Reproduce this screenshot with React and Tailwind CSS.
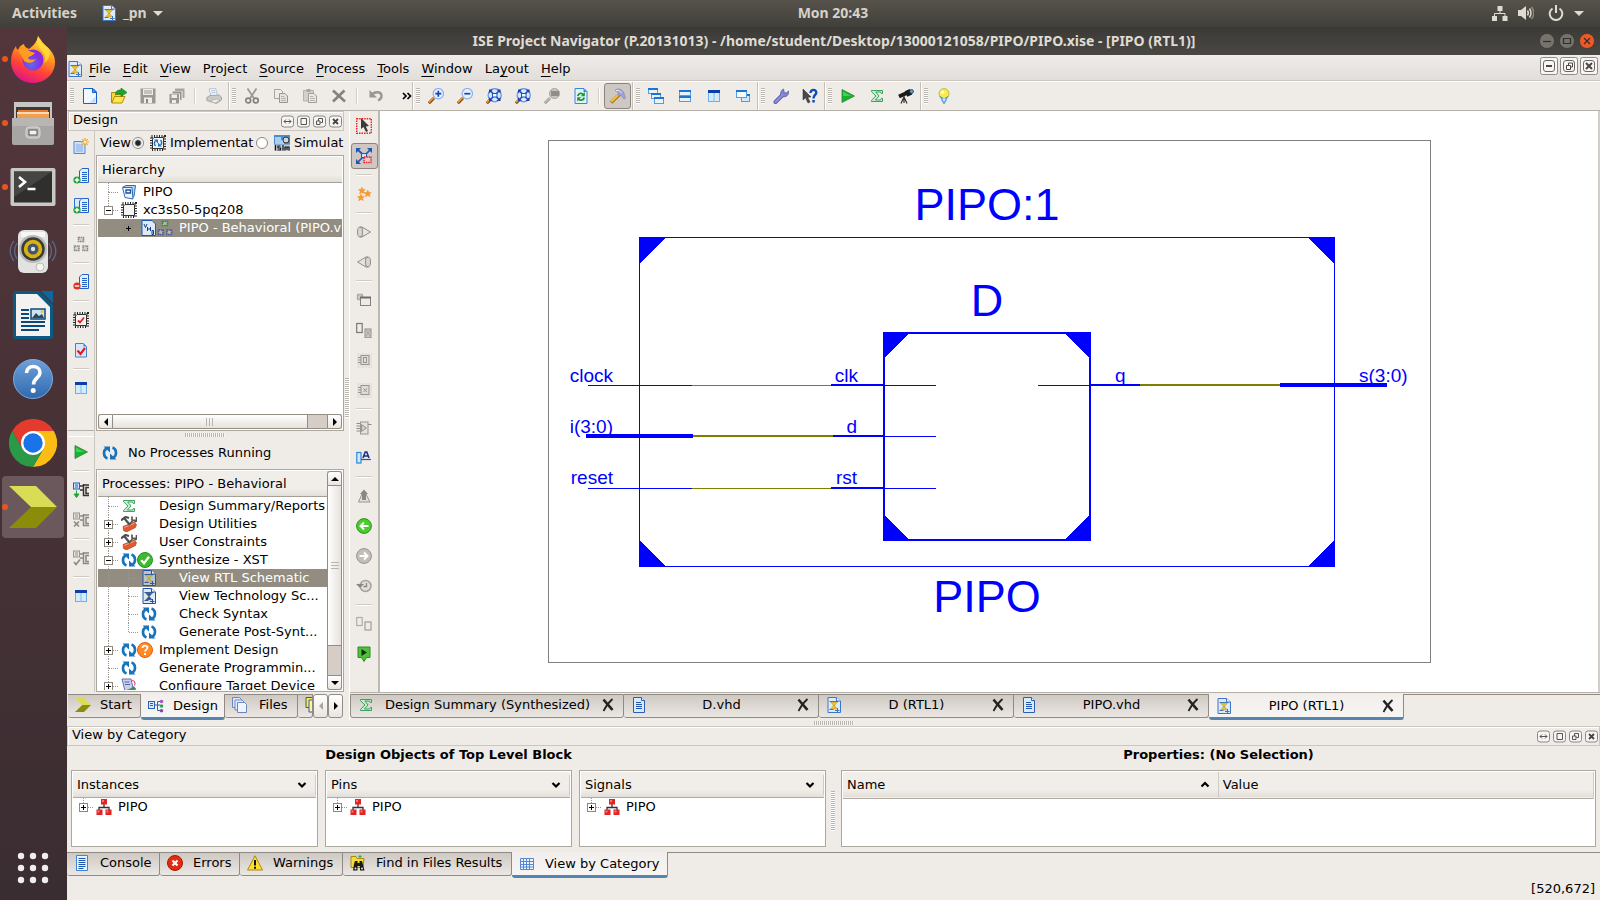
import React from "react";

/* ---------- icon helpers ---------- */
const I = ({ children, s = 16, vb = "0 0 16 16", className = "" }) => (
  <svg width={s} height={s} viewBox={vb} className={"shrink-0 " + className} fill="none" aria-hidden="true">
    {children}
  </svg>
);

const Doc = () => (
  <I>
    <path d="M2.500 .5h8l3 3v12h-11z" fill="#dbe9fb" stroke="#2a5fb8" />
    <path d="M10.500 .5v3h3" fill="#fff" stroke="#2a5fb8" />
    <path d="M5 5.500h5M5 7.500h6M5 9.500h6M5 11.500h6" stroke="#1f56b5" />
  </I>
);
const NewDoc = () => (
  <I>
    <path d="M1.500 .5h9.500l3.500 3.500v11.500h-13z" fill="#eff7ff" stroke="#1560c8" />
    <path d="M10.500 .5v4h4z" fill="#5c9cf0" stroke="#1560c8" />
    <path d="M8 14.500h5.500v-6z" fill="#bcdcff" />
  </I>
);
const OpenFolder = () => (
  <I>
    <path d="M.5 14.500V4.500h5l1 2h5v3z" fill="#f6d838" stroke="#b08a10" />
    <path d="M.8 15 3.500 8.500H14L11 15z" fill="#ffe84a" stroke="#b08a10" />
    <path d="M4.500 7c0-4 2-5.200 5.500-5V0l6 4.500-6 4V6C7.500 5.800 6.500 6 4.500 7z" fill="#1fa52b" stroke="#0c7a1a" strokeWidth=".6" />
  </I>
);
const Save = () => (
  <I>
    <path d="M.5.5h15v15h-15z" fill="#9b9893" />
    <path d="M3 1h10v6H3z" fill="#efebe7" />
    <path d="M4 3h8M4 5h8" stroke="#9b9893" />
    <path d="M4 9.500h8V15H4z" fill="#efebe7" />
    <path d="M6 11h2v4H6z" fill="#8b8883" />
  </I>
);
const SaveAll = () => (
  <I>
    <path d="M6 .5h9.500v9.500h-2V3H6z" fill="#a9a6a1" />
    <path d="M3.500 3.500h9V12h-1.500V5.500H3.500z" fill="#94918c" />
    <path d="M.5 6h9.500v9.500H.5z" fill="#9b9893" />
    <path d="M2.500 6.500h5.500V10H2.500z" fill="#efebe7" />
    <path d="M3 12h4v3H3z" fill="#efebe7" />
  </I>
);
const Printer = () => (
  <I>
    <path d="M3 1 9.500 0l2 8H5z" fill="#f3f6fb" stroke="#a9b6cf" strokeWidth=".8" />
    <path d="M5 3l4-.6M5.500 5l4-.6" stroke="#9fb0d0" strokeWidth=".8" />
    <path d="M.8 9.500 4 7.500l9-.5 2.500 2v3l-5 3.500L.8 12.500z" fill="#cbc9c6" stroke="#9c9995" strokeWidth=".8" />
    <path d="M4 13 11 11l3 1-5 3z" fill="#eef1f5" stroke="#a8a5a1" strokeWidth=".6" />
  </I>
);
const Cut = () => (
  <I>
    <path d="M3.500 .5 9.800 10M12.500 .5 6.200 10" stroke="#9a9792" strokeWidth="1.700" />
    <circle cx="4.200" cy="12.500" r="2.400" stroke="#85827d" strokeWidth="1.700" />
    <circle cx="11.800" cy="12.500" r="2.400" stroke="#85827d" strokeWidth="1.700" />
  </I>
);
const Copy = () => (
  <I>
    <path d="M1.500 1.500h6l2 2v7h-8z" fill="#efebe7" stroke="#a7a49f" />
    <path d="M6.500 5.500h5.500l2.500 2.500v6.500h-8z" fill="#e6e3df" stroke="#98958f" />
    <path d="M8 8.500h3.500M8 10.500h5M8 12.500h5" stroke="#b5b2ad" />
  </I>
);
const Paste = () => (
  <I>
    <path d="M1.500 2.500h10v10.500h-10z" fill="#d3d0cb" stroke="#b5b2ad" />
    <path d="M4.500 1h4v3h-4z" fill="#aaa7a2" />
    <path d="M6.500 5.500h5.500l2.500 2.500v6.500h-8z" fill="#ece9e5" stroke="#a09d98" />
    <path d="M8 8.500h3.500M8 10.500h5M8 12.500h5" stroke="#b5b2ad" />
  </I>
);
const Del = () => (
  <I>
    <path d="M2 2.500 14 13.500M13.500 2.500 2 13.500" stroke="#85827d" strokeWidth="2.600" />
  </I>
);
const Undo = () => (
  <I>
    <path d="M3.500 7.500c2-4 9.500-4.500 10 0 .2 2.500-1.500 4-3.500 4.800" stroke="#9a9792" strokeWidth="2.400" />
    <path d="M1.500 2v7.500h7.500z" fill="#9a9792" />
  </I>
);
const Mag = ({ kind, gray }) => (
  <I>
    <path d="M.8 15.200 6 10" stroke={gray ? "#a5a29d" : "#8a4a18"} strokeWidth="3" />
    <path d="M.8 14.400 5.500 9.800" stroke={gray ? "#bdbab5" : "#f09a30"} strokeWidth="1.600" />
    {gray && (
      <>
        <circle cx="10.500" cy="5.500" r="5" fill="#c9c6c1" stroke="#a5a29d" />
        <rect x="7" y="3" width="8" height="5" fill="#908d88" />
      </>
    )}
    {(kind === "in" || kind === "out") && (
      <circle cx="10.300" cy="5.700" r="5.200" fill="#e3f0ff" stroke="#8fb0ec" strokeWidth="1.200" />
    )}
    {kind === "in" && <path d="M10.300 2.700v6M7.300 5.700h6" stroke="#1c43b0" strokeWidth="1.700" />}
    {kind === "out" && <path d="M7.300 5.700h6" stroke="#1c43b0" strokeWidth="1.700" />}
    {kind === "fit" && (
      <>
        <circle cx="8.700" cy="7.200" r="6.600" fill="#d5e8ff" stroke="#6a90e0" strokeWidth="1.200" />
        <path d="M4 2.500 13.400 12M13.400 2.500 4 12" stroke="#2350b8" strokeWidth="1.700" />
        <path d="M3 1.500h4L3 5.500zM14.500 1.500h-4l4 4zM3 13h4L3 9zM14.500 13h-4l4-4z" fill="#1c43b0" />
        <rect x="6.500" y="5.500" width="4.500" height="3.500" fill="#f4f9ff" stroke="#2350b8" />
      </>
    )}
  </I>
);
const RefreshDoc = () => (
  <I>
    <path d="M2 .5h9l3 3v12H2z" fill="#e1f2ff" stroke="#3a86d8" />
    <path d="M10.500 .5v3.500h3.500" fill="#3a86d8" />
    <path d="M4.800 8c.5-3 4-3.500 5.700-1.500" stroke="#1b9a2a" strokeWidth="1.800" />
    <path d="M11.800 4v4.200H7.800z" fill="#1b9a2a" />
    <path d="M11.200 9.500c-.5 3-4 3.500-5.700 1.500" stroke="#1b9a2a" strokeWidth="1.800" />
    <path d="M4.200 13.500V9.300h4z" fill="#1b9a2a" />
  </I>
);
const Hammer = () => (
  <I>
    <path d="M1 14.500 9.500 6.500" stroke="#a8761a" strokeWidth="3.400" />
    <path d="M1 13.800 9 6.300" stroke="#f4c92c" strokeWidth="2" />
    <path d="M5 2.500C7.500 0 11 .5 13.500 4l2 6-1.500 1-3.500-4L8.500 7.500 8 4z" fill="#9fa4dc" stroke="#7a7fb8" strokeWidth=".6" />
    <path d="M6 2.500 9 2.500l2.500 2.500" stroke="#e8eaff" />
  </I>
);
const Win = ({ x, y, w, h, fill = "#e4f3ff" }) => (
  <>
    <rect x={x + 0.5} y={y + 0.5} width={w - 1} height={h - 1} fill={fill} stroke="#4f9fe6" />
    <rect x={x} y={y} width={w} height="2" fill="#1f74d0" />
  </>
);
const Cascade = () => (
  <I><Win x={0} y={0} w={10} h={6} /><Win x={3} y={5} w={10} h={6} /><Win x={6} y={9} w={10} h={7} /></I>
);
const TileH = () => (
  <I><Win x={2} y={2} w={12} h={6} /><Win x={2} y={8} w={12} h={6} /></I>
);
const TileV = () => (
  <I>
    <rect x="2.500" y="2.500" width="11" height="11" fill="#d5eafc" stroke="#6ab0ec" />
    <rect x="2" y="2" width="12" height="3" fill="#0a3fa8" />
    <path d="M8 5v9" stroke="#7fbcf0" />
  </I>
);
const Overlap = () => (
  <I><Win x={6} y={6} w={9} h={8} fill="#d0e8fc" /><Win x={1} y={2} w={11} h={8} fill="#f4faff" /></I>
);
const Wrench = () => (
  <I>
    <path d="M2.500 14 9 7.500" stroke="#5a5daa" strokeWidth="4" strokeLinecap="round" />
    <path d="M9 8.500c-2.500-2-1.500-6 1.500-7.500l.5 3 2 1.200L15.500 3c1 3.500-2.500 7-6.500 5.500z" fill="#8083cc" stroke="#5a5daa" strokeWidth=".8" />
    <path d="M2.500 14 9.500 7" stroke="#8c8fe0" strokeWidth="2.200" strokeLinecap="round" />
  </I>
);
const WhatsThis = () => (
  <I>
    <path d="M1 1v11l2.600-2.200L6 15l2-1-2.300-4.700L9 9z" fill="#4a4a4a" stroke="#222" strokeWidth=".5" />
    <path d="M8.500 5C8.500 .8 14.500 1 14.300 4.800 14.200 7 11.500 7 11.500 10.500" stroke="#0f4bb8" strokeWidth="2.400" />
    <path d="M10.300 12h2.500v2.500h-2.500z" fill="#0f4bb8" />
  </I>
);
const Play = () => (
  <I>
    <path d="M2 1.500 14.500 8 2 14.500z" fill="#14b52a" stroke="#3b7a4a" strokeWidth=".8" />
    <path d="M3 3.500 11 8H3z" fill="#3fd455" />
  </I>
);
const Sigma = () => (
  <I>
    <path d="M2.500 2.500h11v3h-1.200l-.8-1.500H6.800L10 8l-3.600 4h5.200l.9-1.700h1v3.200h-11v-1.200L7 8 2.500 3.700z" fill="#c8efd0" stroke="#2d9a50" strokeWidth=".9" />
  </I>
);
const Telescope = () => (
  <I>
    <path d="M1 8.500 12 3.500" stroke="#1a1a1a" strokeWidth="4" />
    <path d="M8 6 13 3.700" stroke="#1a1a1a" strokeWidth="6" />
    <circle cx="13.500" cy="3.500" r="2" fill="#4f9fe0" stroke="#111" strokeWidth=".6" />
    <path d="M6 8v7M6 9l-3 6.500M6 9l3 6.500" stroke="#333" strokeWidth="1.200" />
  </I>
);
const Bulb = () => (
  <I>
    <circle cx="8" cy="5.600" r="5" fill="#ffe94a" stroke="#9cb82e" strokeWidth=".8" />
    <circle cx="6.500" cy="4.300" r="1.800" fill="#fffbd0" />
    <path d="M3.800 8.500c1.700 1.200 1.700 3 2.200 4L8 15.800l2-3.300c.5-1 .5-2.800 2.200-4-2 2-6.400 2-8.400 0z" fill="#7fc4f4" stroke="#2f86d0" strokeWidth=".8" />
    <path d="M8 9v4" stroke="#fff" />
  </I>
);

/* left toolbars */
const NewSource = () => (
  <I>
    <path d="M1 3.500h11v12H1z" fill="#cfe0fa" stroke="#5b86cc" />
    <path d="M3 6h7v8H3z" fill="#a9c6f2" />
    <path d="M12 0v8M8 4h8M9.200 1.200l5.600 5.600M14.800 1.200 9.200 6.800" stroke="#f2a52c" strokeWidth="1.200" />
    <circle cx="12" cy="4" r="1.500" fill="#fff3b0" />
  </I>
);
const AddSource = ({ two, minus }) => (
  <I>
    {two && <path d="M1.500 .5h7v11h-7z" fill="#d8e8ff" stroke="#2f6fd0" />}
    <path d="M6.500 3 9 .5h6.500v14h-9z" fill="#e4f0ff" stroke="#2562c4" />
    <path d="M9 4.500h5M9 6.500h5M9 8.500h5M9 10.500h5M9 12.500h5" stroke="#2562c4" />
    <circle cx="4" cy="12" r="3.600" fill={minus ? "#e0301e" : "#1fa33a"} />
    <path d={minus ? "M1.800 12h4.400" : "M1.800 12h4.400M4 9.800v4.400"} stroke="#fff" strokeWidth="1.400" />
  </I>
);
const Modules = ({ top = "#8a8782", c = "#8a8782", fill = "#d8d5d0" }) => (
  <I>
    <rect x="5.500" y="1.500" width="5" height="4" fill={fill} stroke={top} strokeDasharray="1.500 .7" strokeWidth="1.600" />
    <rect x="1.500" y="10" width="4.500" height="4.500" fill={fill} stroke={c} strokeDasharray="1.500 .7" strokeWidth="1.500" />
    <rect x="10" y="10" width="4.500" height="4.500" fill={fill} stroke={c} strokeDasharray="1.500 .7" strokeWidth="1.500" />
  </I>
);
const Chip = ({ check, blue }) => (
  <I>
    <rect x="1.500" y="1.500" width="13" height="13" stroke="#222" strokeWidth="3" strokeDasharray="1 1.500" />
    <path d="M4 2.500h9.500v11h-11V4z" fill="#f4f4f4" stroke="#333" />
    {check && <path d="M5 8.500 7 10.500 11 5.500" stroke="#e02020" strokeWidth="1.800" />}
    {blue && (
      <>
        <path d="M5.500 11C4 9.500 4 7 5.500 6M10.500 5C12 6.500 12 9 10.500 10" stroke="#1878c8" strokeWidth="1.500" />
        <path d="M4 4.500h4v4zM12 11.500H8v-4z" fill="#1878c8" />
      </>
    )}
  </I>
);
const DocCheck = () => (
  <I>
    <path d="M2.500 1.500h8l3 3v10.500h-11z" fill="#d6e6fc" stroke="#4a7fd0" />
    <path d="M10.500 1.500v3h3" fill="#4a7fd0" />
    <path d="M4.500 8.500 7.500 12 12 6" stroke="#e02020" strokeWidth="2.200" />
  </I>
);
const Flow = ({ active, check }) => (
  <I>
    <rect x=".5" y="1" width="6" height="6" fill={active ? "#d6e8ff" : "#e6e3de"} stroke={active ? "#1f5fc0" : "#98958f"} />
    <path d="M2 3h3M2 5h3" stroke={active ? "#1f5fc0" : "#98958f"} />
    <path d="M7 4h3M10.500 2v12M10 3h6M10 8H7M16 5.500h-3v6h3M10 13.500h6" stroke={active ? "#333" : "#8b8883"} strokeWidth="1.500" />
    {active && <path d="M3.500 8.500v4M1 12l2.500 3.500L6 12z" stroke="#1fa33a" fill="#1fa33a" />}
    {!active && !check && <path d="M1 9.500l5 5M6 9.500l-5 5" stroke="#8b8883" strokeWidth="1.600" />}
    {check && <path d="M1 12l2 2.500L7 9.500" stroke="#8b8883" strokeWidth="1.600" />}
  </I>
);

/* schematic toolbar */
const Select = () => (
  <I>
    <rect x=".7" y=".7" width="14.600" height="14.600" stroke="#f02020" strokeWidth="1.400" strokeDasharray="1.500 1" />
    <path d="M5 0v11l2.500-2L10 14l2-1-2.200-4.500L13 8z" fill="#3a3a3a" />
  </I>
);
const Expand = () => (
  <I>
    <path d="M2 2l12 11M14 2 2 14" stroke="#1d55b8" strokeWidth="1.700" />
    <path d="M0 0h5L0 5zM16 0h-5l5 5zM0 16h5l-5-5z" fill="#1d55b8" />
    <path d="M5.500 5.500h5v4h-5z" fill="#cfe4fb" stroke="#1d55b8" />
    <rect x="8" y="9" width="7" height="5.500" fill="#d9cfca" stroke="#f02020" strokeWidth="1.400" strokeDasharray="1.500 .8" />
  </I>
);
const star = (x, y) => <path d={`M${x} ${y - 3.5}l1 2.300 2.500.2-1.800 1.800.7 2.400-2.500-1.200-2.300 1.400.5-2.600-1.800-1.700 2.500-.3z`} fill="#fb9a2c" stroke="#f08a20" strokeWidth=".3" />;
const Stars = () => <I>{star(6, 4.5)}{star(11.8, 7.5)}{star(5, 11.5)}</I>;
const Cone = ({ flip }) => (
  <I className={flip ? "-scale-x-100" : ""}>
    <path d="M6 3l8.500 5L6 13z" fill="#e6e3de" stroke="#918e89" />
    <ellipse cx="4" cy="8" rx="2.500" ry="5" fill="#d8d5d0" stroke="#918e89" />
    <path d="M4 3h2M4 13h2" stroke="#918e89" />
  </I>
);
const ToWin = () => (
  <I>
    <rect x="1.500" y="2.500" width="5" height="5" fill="#d0cdc8" stroke="#84817c" strokeWidth="1.500" strokeDasharray="1 1" />
    <rect x="4.500" y="5.500" width="10" height="8" fill="#eeebe7" stroke="#84817c" />
    <path d="M4 5.500h11" stroke="#6f6c68" strokeWidth="2" />
  </I>
);
const PairBox = ({ light }) => (
  <I>
    <rect x=".7" y="1.500" width="5.500" height={light ? 8 : 9} fill="#efebe7" stroke={light ? "#b0ada8" : "#7b7874"} strokeWidth="1.200" />
    <rect x="9" y={light ? 6 : 7} width="6" height={light ? 8 : 8.5} fill={light ? "#efebe7" : "#ccc9c4"} stroke="#a09d98" strokeWidth="1.200" />
    {!light && <path d="M10 8l4 6M14 8l-4 6" stroke="#a5a29d" />}
  </I>
);
const PinBox = ({ x }) => (
  <I>
    <path d="M1 1h15v15H1z" fill="#e6e3de" />
    <path d="M2 5.500h4M2 8h4M2 10.500h4" stroke="#98958f" />
    <rect x="5" y="3.500" width="8" height="9" fill="#dfdcd7" stroke="#98958f" />
    {x ? <path d="M7.500 6.500l3.500 3.500M11 6.500 7.500 10" stroke="#98958f" /> : <rect x="7.500" y="5.500" width="3" height="5" stroke="#98958f" />}
  </I>
);
const GateBox = () => (
  <I>
    <path d="M.5 3.500h4M.5 6h4M.5 8.500h4M.5 11h4M12 4.500h3.500" stroke="#8f8c87" />
    <rect x="4.500" y="2" width="7.500" height="12" fill="#e6e3de" stroke="#98958f" />
    <path d="M5.500 4.500 10.500 8l-5 3.500z" fill="#cfccc7" stroke="#98958f" />
  </I>
);
const NameBox = () => (
  <I>
    <rect x=".8" y="2.500" width="4.200" height="10.500" fill="#cdeafc" stroke="#2f86d8" strokeWidth="1.200" />
    <path d="M5 9.500h10" stroke="#1f56b5" strokeWidth="1.200" />
    <path d="M7 8 9.200 2h1.600L13 8M8.200 6h3.800" stroke="#1c2f8c" strokeWidth="1.600" />
  </I>
);
const PushUp = () => (
  <I>
    <path d="M2.500 14 6 6h4l4 8z" fill="#e2dfda" stroke="#98958f" />
    <path d="M8 1.500 12 6h-2v6H6V6H4z" fill="#8a8782" />
  </I>
);
const RoundArrow = ({ green }) => (
  <I>
    <circle cx="8" cy="8" r="7.400" fill={green ? "#4ccb2c" : "#c2bfba"} stroke={green ? "#2a9418" : "#96938e"} />
    <path d={green ? "M12.500 8H4.500M8 4.500 4.500 8 8 11.500" : "M3.500 8h8M8 4.500 11.500 8 8 11.500"} stroke="#fff" strokeWidth="1.900" />
  </I>
);
const History = () => (
  <I>
    <circle cx="9.500" cy="8" r="5.500" fill="#e0ddd8" stroke="#a5a29d" strokeWidth="1.500" />
    <path d="M10.500 5v3.500h-3" stroke="#8b8883" strokeWidth="1.300" />
    <path d="M0 6h8L4 10z" fill="#8b8883" />
  </I>
);
const GreenPin = () => (
  <I>
    <path d="M2 1h12v10.500h-3.500L8 15.500l-2.500-4H2z" fill="#4fc23a" stroke="#2f8a22" />
    <path d="M5.500 3 11 6.500l-5.500 3.500z" fill="#14310f" />
  </I>
);

/* tree and tab icons */
const Sync = () => (
  <I>
    <path d="M5.500 13.500C1 12 1 5.500 4.500 3.500" stroke="#1674bc" strokeWidth="2.600" />
    <path d="M1.500 1.500H8v6z" fill="#1674bc" />
    <path d="M10.500 2.500C15 4 15 10.500 11.500 12.500" stroke="#1674bc" strokeWidth="2.600" />
    <path d="M14.500 14.500H8v-6z" fill="#1674bc" />
  </I>
);
const Ok = () => (
  <I><circle cx="8" cy="8" r="7.500" fill="#3dbb2f" stroke="#27901d" /><path d="M4.200 8.200 7 11.200l5-6.400" stroke="#fff" strokeWidth="2.200" /></I>
);
const Ask = () => (
  <I>
    <circle cx="8" cy="8" r="7.500" fill="#ff8a24" stroke="#ee5a10" />
    <path d="M5.500 6C5.500 2.800 10.700 3 10.500 6c-.1 1.500-2.500 1.800-2.500 3.600" stroke="#fff" strokeWidth="1.800" />
    <path d="M7 11h2v2H7z" fill="#fff" />
  </I>
);
const ToolBox = () => (
  <I>
    <path d="M2 10.500 13 6l2.500 2.500L14.500 11.500 5.500 16 2.500 14.500z" fill="#e2582f" stroke="#a8381a" strokeWidth=".6" />
    <path d="M3 11.500 13.500 7.300" stroke="#f2a080" />
    <path d="M0 4.500 4.500 1 8 2M3 2l6 7" stroke="#4f4f4f" strokeWidth="2.200" />
    <path d="M11 .5v3.500l4 .5M12.500 4 8.500 8M15.500 1v4l-2 1" stroke="#555" strokeWidth="1.700" />
  </I>
);
const Rtl = ({ tone = "#eec22e", bg = "#dcebfc", line = "#3f74cc" }) => (
  <I>
    <path d="M2 .5h8.500L14.500 4v11.500H2z" fill={bg} stroke={line} />
    <path d="M10.500 .5V4h4" fill="#fff" stroke={line} />
    <path d="M3.500 4.500h9M3.500 12.500h4" stroke={line} />
    <path d="M4.500 5h7L8 9zM8 8l3.500 4h-7z" fill={tone} stroke="#a08420" strokeWidth=".4" />
    <path d="M9 13.500h4.500M11.500 11v4" stroke={line} />
  </I>
);
const VhdFile = () => (
  <I>
    <path d="M1 .5h10l3.500 3.500v11.500H1z" fill="#ddeafb" stroke="#1c5bb0" />
    <path d="M3 4l1.500 3.500L6 4M6.500 7v4M9.500 7v4M6.500 9h3M11 10.500v4h1.500v-4z" stroke="#123f86" />
  </I>
);
const Project = () => (
  <I>
    <path d="M2 3 5 1.500h9.500l-1.500 11-3 2.500" fill="#b5d2f2" stroke="#2f6db8" />
    <path d="M1.500 3.500h9.500L12 15l-8-1.500z" fill="#edf5fe" stroke="#2f6db8" />
    <path d="M5 6h4.500v3H5z" fill="#fff" stroke="#1c4f9c" strokeWidth="1.300" />
  </I>
);
const Isim = () => (
  <I>
    <path d="M0 0h16v16H0z" fill="#4a8ccc" />
    <path d="M1 2h6v3h3v4H1z" fill="#a8cff2" />
    <circle cx="12" cy="5" r="3" fill="#cfd6dc" stroke="#333" />
    <path d="M0 9.500h16V16H0z" fill="#c5ccd2" />
    <path d="M1.500 10v5.500M6.500 11H4v2h2.500v2H3.500M9 10v5.500M11 15.500V12h4v3.500M13 12v3" stroke="#111" strokeWidth="1.200" />
  </I>
);
const ConfigDev = () => (
  <I>
    <path d="M1 1h9l2 9-8 3z" fill="#c9d0ee" stroke="#6a6fa8" />
    <path d="M3.500 4h5M4 6.500h5" stroke="#5a5f9c" />
    <path d="M11 2.500c3 0 3.500 3 2.500 5" stroke="#e04a7c" strokeWidth="1.200" />
    <path d="M8 14.500 14 9.500" stroke="#3c8f4c" strokeWidth="4" />
    <path d="M2 15h6" stroke="#555" strokeWidth="2" />
  </I>
);
const Chevron = ({ s = 16 }) => (
  <I s={s} vb="0 0 48 44">
    <path d="M0 1h27l21 21H22z" fill="#d9dc55" />
    <path d="M22 22h26L27 43H0z" fill="#8a8c0a" />
  </I>
);
const DesignTab = () => (
  <I>
    <rect x=".5" y="3.500" width="6" height="7" fill="#d8e8ff" stroke="#2a5fb8" /><path d="M2 5.500h3M2 7.500h3M7 7h5M9.500 3.500v9h3M9.500 3.500h3" stroke="#2a5fb8" />
    <circle cx="13.500" cy="3.500" r="1.800" fill="#a05ac8" /><circle cx="13.500" cy="8" r="1.800" fill="#2aa34a" /><circle cx="13.500" cy="12.800" r="1.800" fill="#7a4ab8" />
  </I>
);
const FilesTab = () => (
  <I>
    <path d="M.5 .5h7l2 2v8h-9z" fill="#dde9fb" stroke="#6a86c0" />
    <path d="M3 3h7l2 2v8H3z" fill="#e6effc" stroke="#6a86c0" />
    <path d="M5.500 5.500h7l2 2v8h-9z" fill="#eef5ff" stroke="#6a86c0" />
  </I>
);
const LibTab = () => (
  <I><path d="M1 .5h9v10H1z" fill="#ffe84a" stroke="#2a6f4a" /><path d="M4 3h9v12H4z" fill="#fff2a0" stroke="#2a5fb8" /></I>
);
const Blocks = () => (
  <I>
    <path d="M8 5v4M3 11V8.500h10V11" stroke="#333" strokeWidth="1.300" />
    <path d="M5 0h6v5.500H5zM.5 10.500h6V16h-6zM9.500 10.500h6V16h-6z" fill="#e02424" />
    <path d="M6 1h2v2H6zM1.500 11.500h2v2h-2zM10.500 11.500h2v2h-2z" fill="#f47a7a" />
  </I>
);
const ConsoleI = () => (
  <I><path d="M2.500 .5h11v15h-11z" fill="#e8f4ff" stroke="#3a86d8" /><path d="M4.500 3.500h7M4.500 5.500h7M4.500 7.500h7M4.500 9.500h7M4.500 11.500h7M4.500 13.500h5" stroke="#1f56b5" /></I>
);
const ErrI = () => (
  <I><circle cx="8" cy="8" r="7.500" fill="#e32a12" stroke="#a81806" /><path d="M5.500 5.500l5 5M10.500 5.500l-5 5" stroke="#fff" strokeWidth="2.200" /></I>
);
const WarnI = () => (
  <I><path d="M8 .8 15.500 15H.5z" fill="#ffdf2e" stroke="#a88a10" strokeLinejoin="round" /><path d="M8 5v5.500M8 11.800v2" stroke="#111" strokeWidth="2" /></I>
);
const FindI = () => (
  <I>
    <path d="M1 1.500h5l1 2h7l-1 9H1z" fill="#f4dc3c" stroke="#a88a10" /><path d="M10 0v3M8.500 1.500h3" stroke="#2aa34a" />
    <path d="M5 6h2.500v9.500H3L4 9zM9.500 6H12l2.500 9.500H10z" fill="#1a1a1a" /><path d="M7 8h3v3H7z" fill="#1a1a1a" />
    <circle cx="5.500" cy="13.500" r="1" fill="#ddd" /><circle cx="12" cy="13.500" r="1" fill="#ddd" />
  </I>
);
const GridI = () => (
  <I><path d="M1.500 2.500h13v11h-13z" fill="#eef4fe" stroke="#5a88d0" /><path d="M1.500 5.500h13M1.500 8.500h13M1.500 11h13M4.500 2.500v11M7.500 2.500v11M10.500 2.500v11" stroke="#5a88d0" /></I>
);

/* ---------- small pieces ---------- */
const Tool = ({ label, on, children, tall }) => (
  <button
    type="button"
    aria-label={label}
    title={label}
    className={"flex shrink-0 items-center justify-center " + (tall ? "h-[30px] w-full" : "h-full w-[29px]")}
  >
    <span
      className={
        "flex h-[26px] w-[27px] items-center justify-center rounded-[3px] border " +
        (on ? "border-[#8c857e] bg-[#cfc8c2]" : "border-transparent")
      }
    >
      {children}
    </span>
  </button>
);
const VSep = () => (
  <div className="flex w-2 shrink-0 items-center justify-center"><div className="h-4 w-[2px] border-l border-[#d3cec8] bg-white" /></div>
);
const HSep = () => (
  <div className="flex h-2 shrink-0 items-center justify-center"><div className="h-[2px] w-4 border-t border-[#cfcac4] bg-white" /></div>
);
const GripV = ({ h = "h-4" }) => (
  <div className={"w-1 bg-[repeating-linear-gradient(to_bottom,#b9b4ad_0_1px,#ffffff_1px_2px)] " + h} />
);
const GripH = () => (
  <div className="h-1 w-10 bg-[repeating-linear-gradient(to_right,#b9b4ad_0_1px,#f8f6f4_1px_2px)]" />
);
const Section = ({ children, last }) => (
  <div className={"flex h-full shrink-0 border-l border-white " + (last ? "" : "border-r border-r-[#c5c0b9]")}>
    <div className="flex w-[7px] items-center justify-center"><GripV /></div>
    {children}
  </div>
);
const DockBtns = () => (
  <div className="flex gap-[3px]">
    {[
      ["Move", <path key="a" d="M3 6.500h7M5 4.500l-2 2 2 2M8 4.500l2 2-2 2" stroke="#555" />],
      ["Maximize", <path key="b" d="M4 3.500h5.500v6H4z" stroke="#555" />],
      ["Float", <path key="c" d="M3.500 6h3.500v3.500H3.500zM5.500 6V3.500h4v4H7.500" stroke="#555" />],
      ["Close", <path key="d" d="M4 4l5 5M9 4l-5 5" stroke="#444" strokeWidth="1.800" />],
    ].map(([l, g]) => (
      <button key={l} type="button" aria-label={l}>
        <I s={13} vb="0 0 13 13"><rect x=".5" y="1" width="12" height="11" rx="2.500" fill="#f7f5f3" stroke="#8c8782" />{g}</I>
      </button>
    ))}
  </div>
);
const DockHead = ({ title }) => (
  <div className="flex h-5 shrink-0 items-center justify-between border border-[#cbc6c0] pl-1 pr-px shadow-[inset_1px_1px_0_#fff]">
    <h2 className="pb-[2px]">{title}</h2>
    <DockBtns />
  </div>
);

/* tree gutter cell, 20 x 18 */
const G = ({ up, down, right, box }) => (
  <svg width="20" height="18" viewBox="0 0 20 18" className="shrink-0" fill="none" shapeRendering="crispEdges" aria-hidden="true">
    <g stroke="#9a968f" strokeDasharray="1 1">
      {up && <path d="M10.500 0v9" />}
      {down && <path d="M10.500 9v9" />}
      {right && <path d="M11 9.500h9" />}
    </g>
    {box && (
      <>
        <rect x="6.500" y="5.500" width="8" height="8" fill={box === "*" ? "none" : "#fff"} stroke="#8c8880" />
        <path d={box === "-" ? "M8 9.500h5" : "M8 9.500h5M10.500 7v5"} stroke="#000" />
      </>
    )}
  </svg>
);
const Row = ({ gut, icons, wide, text, sel }) => (
  <li
    role="treeitem"
    aria-selected={!!sel}
    className={"flex h-[18px] items-center whitespace-nowrap " + (sel ? "bg-[#928d80] text-white" : "")}
  >
    {gut}
    <span className={"ml-[3px] mr-[6px] flex shrink-0 " + (wide ? "w-8" : "w-4")}>{icons}</span>
    <span className="pb-px">{text}</span>
  </li>
);

const ScrollBtn = ({ d, label, className, dim }) => (
  <button
    type="button"
    aria-label={label}
    className={"flex shrink-0 items-center justify-center border border-[#928c85] bg-linear-to-b from-white to-[#e9e5e1] " + className}
  >
    <I s={10} vb="0 0 10 10"><path d={d} fill={dim ? "#aaa59f" : "#000"} /></I>
  </button>
);

const Tab = ({ icon, label, active, className = "", center, close, pad = "pl-[10px]" }) => (
  <button
    type="button"
    role="tab"
    aria-selected={!!active}
    className={
      "flex shrink-0 items-center overflow-hidden whitespace-nowrap rounded-b-[3px] border-r border-[#8f8a84] px-[7px] " +
      (active
        ? "h-[26px] border-b-[3px] border-b-[#5585ae] bg-linear-to-b from-[#f1eeeb] to-[#f7f5f3] "
        : "h-6 border-b border-t border-[#8f8a84] bg-linear-to-b from-[#cfc9c3] to-[#ebe7e3] pb-[2px] ") +
      className
    }
  >
    {icon}
    <span className={center ? "flex-1 text-center" : pad}>{label}</span>
    {close && (
      <I s={14} vb="0 0 14 14" className="mr-px"><path d="M2.500 1.500c2.500 3 6 7 9 10.500" stroke="#222" strokeWidth="2.600" /><path d="M11.500 1C8 4 5 8 2.500 13" stroke="#222" strokeWidth="1.700" /></I>
    )}
  </button>
);

const CatBox = ({ title }) => (
  <div className="flex min-w-0 flex-1 flex-col border border-[#aca79f] bg-white p-px">
    <div className="flex h-[26px] items-center justify-between border-b border-[#b0aaa3] bg-linear-to-b from-[#f1eeea] from-70% to-[#e3ded8] pl-1 text-left">
      <span>{title}</span>
      <span className="flex h-5 items-center border-r border-[#cfcac4] pr-2">
        <I s={10} vb="0 0 10 10"><path d="M1.500 3 5 6.500 8.500 3" stroke="#000" strokeWidth="2.200" /></I>
      </span>
    </div>
    <ul role="tree">
      <Row gut={<G up right box="+" />} icons={<Blocks />} text="PIPO" />
    </ul>
  </div>
);

/* ---------- schematic ---------- */
const B = "#0000ff";
const O = "#808000";
const bars = [
  // x, y, w, h, colour
  [588, 385, 104, 1, B], [692, 385, 140, 1, O], [831, 384, 52, 2, B], [883, 385, 53, 1, B],
  [586, 434, 107, 4, B], [693, 435, 140, 2, O], [833, 435, 50, 2, B], [883, 436, 53, 1, B],
  [588, 488, 104, 1, B], [692, 488, 140, 1, O], [831, 487, 52, 2, B], [883, 488, 53, 1, B],
  [1038, 385, 51, 1, B], [1089, 384, 51, 2, B], [1140, 384, 140, 2, O], [1280, 383, 107, 4, B],
];
const small = [
  ["clock", 613, 382, "end"], ["i(3:0)", 613, 433, "end"], ["reset", 613, 484, "end"],
  ["clk", 858, 382, "end"], ["d", 857, 433, "end"], ["rst", 857, 484, "end"],
  ["q", 1115, 382, "start"], ["s(3:0)", 1359, 382, "start"],
];
const big = [["PIPO:1", 987, 220], ["D", 987, 316], ["PIPO", 987, 612]];
const corners = (l, t, r, b, c) =>
  `M${l} ${t}h${c}l-${c} ${c}zM${r} ${t}v${c}l-${c + 1}-${c}zM${l} ${b}v-${c}l${c} ${c}zM${r} ${b}h-${c + 1}l${c + 1}-${c}z`;

const Schematic = () => (
  <svg width="883" height="523" viewBox="548 140 883 523" role="img" aria-label="PIPO RTL schematic" fontFamily="Liberation Sans, Arial, sans-serif" fill={B}>
    <g shapeRendering="crispEdges">
      <rect x="548.500" y="140.500" width="882" height="522" fill="none" stroke="#808080" />
      <rect x="639.500" y="237.500" width="695" height="329" fill="none" stroke={B} />
      <path d={corners(639, 237, 1335, 567, 27)} />
      <rect x="884" y="333" width="206" height="207" fill="none" stroke={B} strokeWidth="2" />
      <path d={corners(883, 332, 1091, 541, 27)} />
      {bars.map(([x, y, w, h, c], i) => <rect key={i} x={x} y={y} width={w} height={h} fill={c} />)}
    </g>
    {big.map(([t, x, y]) => <text key={t} x={x} y={y} fontSize="45" textAnchor="middle">{t}</text>)}
    {small.map(([t, x, y, a]) => <text key={t} x={x} y={y} fontSize="19" textAnchor={a}>{t}</text>)}
  </svg>
);

/* ---------- launcher ---------- */
const Firefox = () => (
  <I s={48} vb="0 0 48 48">
    <defs>
      <linearGradient id="ffo" x1=".8" y1="0" x2=".4" y2="1"><stop offset="0" stopColor="#fff04a" /><stop offset=".4" stopColor="#ff9a1e" /><stop offset=".7" stopColor="#ff4436" /><stop offset="1" stopColor="#e31587" /></linearGradient>
      <radialGradient id="ffp" cx=".4" cy=".7"><stop offset="0" stopColor="#5b6df2" /><stop offset="1" stopColor="#8a2be0" /></radialGradient>
    </defs>
    <path d="M29 1c3 4 4 6 8 10 5 4 9 9 9 16 0 12-10 21-22 21S2 39 2 26C2 20 4 15 7 11c0 2 1 3 2 4 1-3 3-5 6-6 0 2 2 4 5 5 4-3 8-7 9-13z" fill="url(#ffo)" />
    <circle cx="24" cy="25" r="10.500" fill="url(#ffp)" />
    <path d="M9 15c3-2 8-1 11 1l6 2c-2 3-6 3-7 5 0 1 4 3 8 1-2 4-8 5-12 2-1-3-4-8-6-11z" fill="#ff9e1c" />
    <path d="M29 1c-2 8 0 11 4 15 3 3 4 8 2 12 5-3 7-9 5-14C37 10 31 8 29 1z" fill="#ffe03c" opacity=".8" />
  </I>
);
const FilesApp = () => (
  <I s={48} vb="0 0 48 48">
    <path d="M5 3h38v20H5z" fill="#c6c6c4" /><path d="M7 8h34v14H7z" fill="#3c3a38" />
    <path d="M9 11h30v9H9z" fill="#e9782c" /><path d="M8 13h32v2H8z" fill="#f8d9b8" /><path d="M8 15h32v6H8z" fill="#f0a050" />
    <path d="M3 19h42v25a2 2 0 0 1-2 2H5a2 2 0 0 1-2-2z" fill="#a7a6a4" /><path d="M3 19h42v8H3z" fill="#b7b6b4" />
    <rect x="17" y="28" width="14" height="11" rx="3" fill="#bdbcba" stroke="#d8d7d5" /><rect x="20" y="31" width="8" height="5" fill="#f2f1ef" stroke="#55534f" />
  </I>
);
const Term = () => (
  <I s={48} vb="0 0 48 48">
    <rect x="1.500" y="5" width="45" height="38" rx="2" fill="#c9c8c5" /><rect x="5" y="8.500" width="38" height="31" fill="#2f2f2e" />
    <path d="M5 8.500h38L5 34z" fill="#454544" /><path d="M10 14l6 5-6 5M18.500 26h8" stroke="#fff" strokeWidth="2.600" />
  </I>
);
const Rhythm = () => (
  <I s={48} vb="0 0 48 48">
    <path d="M5 14c-5 6-5 14 0 20M43 14c5 6 5 14 0 20M8 16c-3 5-3 11 0 16M40 16c3 5 3 11 0 16" stroke="#5a6880" strokeWidth="1.400" />
    <rect x="9" y="3" width="30" height="43" rx="6" fill="#e2e2e0" /><path d="M12 5h24v5H12z" fill="#f6f6f5" />
    <circle cx="24" cy="22" r="14" fill="#b9b9b7" /><circle cx="24" cy="22" r="10.500" fill="#d9b312" stroke="#3a3a3a" strokeWidth="2.500" />
    <circle cx="24" cy="22" r="5.500" fill="#44546a" /><circle cx="24" cy="22" r="2.200" fill="#dfe6ee" /><circle cx="31" cy="40" r="4" fill="#f4f4f3" stroke="#bbb" />
  </I>
);
const Writer = () => (
  <I s={48} vb="0 0 48 48">
    <path d="M6 0h24l14 14v31a3 3 0 0 1-3 3H7a3 3 0 0 1-3-3V3z" fill="#0b5a86" /><path d="M32 0h12v12z" fill="#0a6aa0" />
    <path d="M7 3h21l13 13v29H7z" fill="#f3f2f0" />
    <path d="M12 19h8M12 23h8M12 27h8M12 31h24M12 35h24M12 39h18" stroke="#0b4a78" strokeWidth="2" />
    <path d="M22 18h14v10H22z" fill="#cde2f2" stroke="#0b4a78" strokeWidth="1.500" /><path d="M23 27l4-5 3 3 3-2 2 4z" fill="#274b5c" /><circle cx="33" cy="20.500" r="1.500" fill="#f0c040" />
  </I>
);
const Help = () => (
  <I s={48} vb="0 0 48 48">
    <defs><linearGradient id="hp" x2="0" y2="1"><stop stopColor="#6fa0dc" /><stop offset="1" stopColor="#2f6aae" /></linearGradient></defs>
    <circle cx="24" cy="24" r="19.500" fill="url(#hp)" stroke="#7ea8dc" />
    <path d="M17.500 18c0-9 13.500-8 13.500-.5 0 5.500-6.500 5.500-6.500 12" stroke="#fff" strokeWidth="3.600" /><circle cx="24.200" cy="35.500" r="2.500" fill="#fff" />
  </I>
);
const Chrome = () => (
  <I s={48} vb="0 0 48 48">
    <path d="M3.200 12A24 24 0 0 1 44.800 12H24L13.600 30z" fill="#e33b2e" />
    <path d="M24 48l10.400-18L24 12h20.800A24 24 0 0 1 24 48z" fill="#fbbc16" />
    <path d="M3.200 12l10.400 18a12 12 0 0 0 20.800 0L24 48A24 24 0 0 1 3.200 12z" fill="#2a9a48" />
    <circle cx="24" cy="24" r="12" fill="#fff" /><circle cx="24" cy="24" r="9.700" fill="#1a73e8" />
  </I>
);
const apps = [
  ["Firefox", <Firefox />, true], ["Files", <FilesApp />, true], ["Terminal", <Term />, true], ["Rhythmbox", <Rhythm />],
  ["Writer", <Writer />], ["Help", <Help />], ["Chrome", <Chrome />], ["ISE", <Chevron s={48} />, true, true],
];

const Menu = ({ pre = "", k, post }) => (
  <button type="button" className="px-[6px] text-[13px]">
    {pre}<span className="underline decoration-1 underline-offset-[3px]">{k}</span>{post}
  </button>
);

const SysFont = "font-['Noto_Sans','DejaVu_Sans',sans-serif]";

export default function App() {
  return (
    <div className="flex h-screen min-h-[720px] w-full flex-col overflow-hidden bg-[#efebe7] font-['DejaVu_Sans',sans-serif] text-[13px] leading-[16px] text-black">
      {/* system bar */}
      <header className={"grid h-[27px] shrink-0 grid-cols-3 items-center bg-linear-to-b from-[#57534b] to-[#403f3a] pb-px pl-3 pr-4 text-[14px] font-bold text-[#d6d2c9] " + SysFont}>
        <div className="flex items-center">
          <button type="button">Activities</button>
          <button type="button" className="ml-6 flex items-center gap-[6px]">
            <Rtl /> _pn
            <I s={10} vb="0 0 10 10"><path d="M0 3h10L5 8z" fill="#dfdbd2" /></I>
          </button>
        </div>
        <div className="pl-[70px] text-center"><time>Mon 20:43</time></div>
        <div className="flex items-center justify-end gap-[10px]">
          <I><path d="M5.500 1h5v5h-5zM0 11h5v5H0zM10.500 11h5v5h-5z" fill="#dfdbd2" /><path d="M8 6v2.500M2.500 11V8.500h10.500V11" stroke="#dfdbd2" /></I>
          <I><path d="M0 5h3l5-4v14l-5-4H0z" fill="#dfdbd2" /><path d="M9.500 5.500c1 1.500 1 3.500 0 5M11.500 3.500c2 3 2 6 0 9" stroke="#dfdbd2" strokeWidth="1.500" /><path d="M13.500 2c3 4 3 8 0 12" stroke="#8a877f" strokeWidth="1.500" /></I>
          <I className="ml-1"><path d="M4.500 3.500a6.300 6.300 0 1 0 7 0M8 0v8" stroke="#dfdbd2" strokeWidth="2" /></I>
          <I s={10} vb="0 0 10 10"><path d="M0 3h10L5 8z" fill="#dfdbd2" /></I>
        </div>
      </header>

      <div className="flex min-h-0 flex-1">
        {/* launcher */}
        <nav aria-label="Launcher" className="flex w-[67px] shrink-0 flex-col bg-linear-to-b from-[#53363b] to-[#3a2d31]">
          {apps.map(([n, ic, dot, on]) => (
            <button key={n} type="button" aria-label={n} className="flex h-16 w-[66px] shrink-0 items-center">
              <span className={"ml-[2px] flex h-[62px] w-[62px] items-center rounded-[4px] " + (on ? "bg-[#6b585d]" : "")}>
                <span className={"h-[6px] w-[6px] shrink-0 rounded-full " + (dot ? "bg-[#e95420]" : "")} />
                <span className="ml-px">{ic}</span>
              </span>
            </button>
          ))}
          <button type="button" aria-label="Show Applications" className="mb-4 mr-px mt-auto flex justify-center">
            <I s={32} vb="0 0 32 32">
              {[4, 16, 28].map((y) => [4, 16, 28].map((x) => <circle key={x + "-" + y} cx={x} cy={y} r="3.200" fill="#f0eeec" />))}
            </I>
          </button>
        </nav>

        <div className="flex min-w-0 flex-1 flex-col">
          {/* title bar */}
          <div className="flex h-7 shrink-0 items-center bg-linear-to-b from-[#3b3a36] to-[#4a4843] pl-[62px] pr-[5px]">
            <h1 className={"flex-1 pb-px text-center text-[14px] font-bold text-[#dfdbd2] " + SysFont}>
              ISE Project Navigator (P.20131013) - /home/student/Desktop/13000121058/PIPO/PIPO.xise - [PIPO (RTL1)]
            </h1>
            <div className="flex gap-1">
              {[["Minimize", "M4 8.500h8", "#76736c"], ["Maximize", "M4.500 5.500h7v5h-7z", "#76736c"], ["Close", "M5 5l6 6M11 5l-6 6", "#ec5a29"]].map(([l, d, c]) => (
                <button key={l} type="button" aria-label={l}><I><circle cx="8" cy="8" r="7.500" fill={c} stroke="#33312d" strokeWidth=".6" /><path d={d} stroke="#2f2e2a" strokeWidth="1.200" /></I></button>
              ))}
            </div>
          </div>

          {/* menu bar */}
          <div className="flex h-[26px] shrink-0 items-center border-b border-[#cbc6c0] bg-linear-to-b from-[#efecea] to-[#e2deda] pr-[2px] pt-[2px]">
            <Rtl />
            <Menu k="F" post="ile" /><Menu k="E" post="dit" /><Menu k="V" post="iew" /><Menu pre="P" k="r" post="oject" />
            <Menu k="S" post="ource" /><Menu k="P" post="rocess" /><Menu k="T" post="ools" /><Menu k="W" post="indow" />
            <Menu pre="La" k="y" post="out" /><Menu k="H" post="elp" />
            <div className="mb-[6px] ml-auto flex gap-[2px]">
              {[["Minimize", "M6 9h6"], ["Restore", "M6.500 8.500h4v4h-4zM8.500 8V6h4v4h-2"], ["Close", "M6 6l6 6M12 6l-6 6"]].map(([l, d]) => (
                <button key={l} type="button" aria-label={l + " document"}>
                  <I s={18} vb="0 0 18 18"><rect x=".5" y=".5" width="17" height="17" rx="2" fill="#f8f6f4" stroke="#8f8a84" /><rect x="3.500" y="3.500" width="11" height="11" rx="2.500" stroke="#6a6661" /><path d={d} stroke="#4c4945" strokeWidth={l === "Restore" ? 1 : 2} /></I>
                </button>
              ))}
            </div>
          </div>

          {/* tool bar */}
          <div role="toolbar" className="flex h-[30px] shrink-0 border-b border-t border-b-[#b5b0a8] border-t-white">
            <Section>
              <Tool label="New"><NewDoc /></Tool><Tool label="Open"><OpenFolder /></Tool><Tool label="Save"><Save /></Tool><Tool label="Save All"><SaveAll /></Tool>
              <VSep /><Tool label="Print"><Printer /></Tool>
            </Section>
            <Section>
              <Tool label="Cut"><Cut /></Tool><Tool label="Copy"><Copy /></Tool><Tool label="Paste"><Paste /></Tool><Tool label="Delete"><Del /></Tool>
              <VSep /><Tool label="Undo"><Undo /></Tool>
              <button type="button" aria-label="More" className="flex w-[22px] items-center justify-end">
                <I s={10} vb="0 0 10 10"><path d="M1 2l3 3-3 3M5.500 2l3 3-3 3" stroke="#000" strokeWidth="1.700" /></I>
              </button>
            </Section>
            <Section>
              <Tool label="Zoom In"><Mag kind="in" /></Tool><Tool label="Zoom Out"><Mag kind="out" /></Tool><Tool label="Zoom Full"><Mag kind="fit" /></Tool>
              <Tool label="Zoom Box"><Mag kind="fit" /></Tool><Tool label="Zoom Selected"><Mag gray /></Tool><Tool label="Refresh"><RefreshDoc /></Tool>
              <VSep /><Tool label="Build" on><Hammer /></Tool>
            </Section>
            <Section>
              <Tool label="Cascade"><Cascade /></Tool><Tool label="Tile Horizontally"><TileH /></Tool><Tool label="Tile Vertically"><TileV /></Tool><Tool label="Float Window"><Overlap /></Tool>
            </Section>
            <Section><Tool label="Preferences"><Wrench /></Tool><Tool label="What's This"><WhatsThis /></Tool></Section>
            <Section><Tool label="Run"><Play /></Tool><Tool label="Summary"><Sigma /></Tool><Tool label="Analyze"><Telescope /></Tool></Section>
            <Section last><Tool label="Tips"><Bulb /></Tool></Section>
          </div>

          {/* middle */}
          <div className="flex min-h-0 flex-1">
            {/* design dock */}
            <aside className="flex w-[277px] shrink-0 flex-col pl-px">
              <DockHead title="Design" />
              <div className="flex min-h-0 flex-1">
                <div className="flex w-[27px] shrink-0 flex-col border-r border-[#cbc6c0]">
                  <div className="flex h-[300px] flex-col border-b border-b-[#b5b0a8]">
                    <Tool tall label="New Source"><NewSource /></Tool><Tool tall label="Add Source"><AddSource /></Tool><Tool tall label="Add Copy"><AddSource two /></Tool>
                    <HSep /><Tool tall label="Modules"><Modules /></Tool><HSep /><Tool tall label="Remove"><AddSource minus /></Tool>
                    <HSep /><Tool tall label="Design Properties"><Chip check /></Tool><Tool tall label="Check"><DocCheck /></Tool>
                    <HSep /><Tool tall label="Panel"><TileV /></Tool>
                  </div>
                  <div className="mt-[5px] flex flex-1 flex-col border-t border-white">
                    <Tool tall label="Run Process"><Play /></Tool><HSep /><Tool tall label="Rerun"><Flow active /></Tool><Tool tall label="Stop"><Flow /></Tool>
                    <HSep /><Tool tall label="Verify"><Flow check /></Tool><HSep /><Tool tall label="Process Panel"><TileV /></Tool>
                  </div>
                </div>

                <div className="flex min-w-0 flex-1 flex-col pl-px">
                  <div role="radiogroup" aria-label="View" className="flex h-6 shrink-0 items-center whitespace-nowrap pl-1">
                    <span className="w-8">View</span>
                    <input id="impl" type="radio" name="view" defaultChecked className="h-3 w-3 shrink-0 appearance-none rounded-full border border-[#8c8782] bg-white checked:bg-[radial-gradient(circle,#222_0_2px,#fff_4px)]" />
                    <label htmlFor="impl" className="ml-[6px] flex w-[102px] shrink-0 gap-1"><Chip blue />Implementat</label>
                    <input id="sim" type="radio" name="view" className="ml-1 h-3 w-3 shrink-0 appearance-none rounded-full border border-[#8c8782] bg-white" />
                    <label htmlFor="sim" className="ml-[6px] flex gap-1"><Isim />Simulat</label>
                  </div>

                  <section className="flex h-[276px] shrink-0 flex-col border border-[#aca79f] bg-white p-px">
                    <div className="flex h-[26px] shrink-0 items-center border-b border-[#a59f98] bg-linear-to-b from-[#f1eeea] from-70% to-[#e3ded8] pl-1">Hierarchy</div>
                    <ul role="tree" className="flex-1">
                      <Row gut={<G up down right />} icons={<Project />} text="PIPO" />
                      <Row gut={<G up right box="-" />} icons={<Chip />} text="xc3s50-5pq208" />
                      <Row sel gut={<><G /><G right box="*" /></>} icons={<><VhdFile /><Modules top="#2a8a3a" c="#4a55a0" fill="#b9bda8" /></>} wide text="PIPO - Behavioral (PIPO.v" />
                    </ul>
                    <div className="flex h-[15px] shrink-0 bg-[#d6cdc6]">
                      <ScrollBtn label="Scroll left" d="M7 1v8L3 5z" className="w-[15px] rounded-l-[3px]" />
                      <div className="flex w-[195px] items-center justify-center border-y border-r border-[#928c85] bg-linear-to-b from-white to-[#e6e1dc]"><div className="h-2 w-2 bg-[repeating-linear-gradient(to_right,#b9b4ad_0_1px,transparent_1px_3px)]" /></div>
                      <div className="flex-1 border-y border-[#928c85]" />
                      <ScrollBtn label="Scroll right" d="M3 1v8l4-4z" className="w-[15px] rounded-r-[3px]" />
                    </div>
                  </section>
                  <div className="flex h-[7px] shrink-0 items-center justify-center pr-[30px]"><GripH /></div>

                  <div className="flex h-[31px] shrink-0 items-center gap-[10px] pb-[2px] pl-[6px]"><Sync />No Processes Running</div>

                  <section className="flex min-h-0 flex-1 border border-[#aca79f] bg-white p-px">
                    <div className="flex min-w-0 flex-1 flex-col">
                      <div className="flex h-[26px] shrink-0 items-center border-b border-[#a59f98] bg-linear-to-b from-[#f1eeea] from-70% to-[#e3ded8] pl-1">Processes: PIPO - Behavioral</div>
                      <ul role="tree" className="min-h-0 flex-1 overflow-hidden">
                        <Row wide gut={<G up down right />} icons={<Sigma />} text="Design Summary/Reports" />
                        <Row wide gut={<G up down right box="+" />} icons={<ToolBox />} text="Design Utilities" />
                        <Row wide gut={<G up down right box="+" />} icons={<ToolBox />} text="User Constraints" />
                        <Row wide gut={<G up down right box="-" />} icons={<><Sync /><Ok /></>} text="Synthesize - XST" />
                        <Row wide sel gut={<><G up down /><G up down right /></>} icons={<Rtl bg="#b9c3cc" tone="#c9bd5a" line="#2453a8" />} text="View RTL Schematic" />
                        <Row wide gut={<><G up down /><G up down right /></>} icons={<Rtl tone="#2a55a8" line="#2453a8" />} text="View Technology Sc..." />
                        <Row wide gut={<><G up down /><G up down right /></>} icons={<Sync />} text="Check Syntax" />
                        <Row wide gut={<><G up down /><G up right /></>} icons={<Sync />} text="Generate Post-Synt..." />
                        <Row wide gut={<G up down right box="+" />} icons={<><Sync /><Ask /></>} text="Implement Design" />
                        <Row wide gut={<G up down right />} icons={<Sync />} text="Generate Programmin..." />
                        <Row wide gut={<G up down right box="+" />} icons={<ConfigDev />} text="Configure Target Device" />
                      </ul>
                    </div>
                    <div className="flex w-[15px] shrink-0 flex-col bg-[#d6cdc6]">
                      <ScrollBtn label="Scroll up" d="M1 7h8L5 3z" className="h-[15px] rounded-t-[3px]" />
                      <div className="flex h-[160px] items-center justify-center border-x border-b border-[#928c85] bg-linear-to-r from-white to-[#e6e1dc]"><div className="h-2 w-2 bg-[repeating-linear-gradient(to_bottom,#b9b4ad_0_1px,transparent_1px_3px)]" /></div>
                      <div className="flex-1 border-x border-[#928c85]" />
                      <ScrollBtn label="Scroll down" d="M1 3h8L5 7z" className="h-[15px] rounded-b-[3px]" />
                    </div>
                  </section>
                </div>
              </div>
              <div role="tablist" className="mt-[2px] flex h-[26px] shrink-0 items-start">
                <Tab icon={<Chevron />} label="Start" pad="pl-[9px]" className="w-[73px]" />
                <Tab icon={<DesignTab />} label="Design" pad="pl-[9px]" active className="w-[84px]" />
                <Tab icon={<FilesTab />} label="Files" pad="pl-[11px]" className="w-[73px]" />
                <Tab icon={<LibTab />} label="" className="w-[15px]" />
                <ScrollBtn label="Previous tab" dim d="M7 1v8L3 5z" className="h-6 w-[15px] rounded-[3px]" />
                <ScrollBtn label="Next tab" d="M3 1v8l4-4z" className="h-6 w-[15px] rounded-[3px]" />
              </div>
            </aside>

            <div className="flex w-[6px] shrink-0 items-center justify-center border-r border-white pb-9"><GripV h="h-10" /></div>

            {/* schematic view */}
            <main className="flex min-w-0 flex-1 flex-col">
              <div className="flex min-h-0 flex-1">
                <div role="toolbar" aria-orientation="vertical" className="flex w-[30px] shrink-0 flex-col border-r-2 border-[#bdb8b0]">
                  <Tool tall label="Select"><Select /></Tool><Tool tall on label="Expand"><Expand /></Tool><HSep />
                  <Tool tall label="Highlight"><Stars /></Tool><HSep />
                  <Tool tall label="Output Cone"><Cone /></Tool><Tool tall label="Input Cone"><Cone flip /></Tool><HSep />
                  <Tool tall label="New View"><ToWin /></Tool><Tool tall label="Remove Item"><PairBox /></Tool><Tool tall label="Add Pins"><PinBox /></Tool><Tool tall label="Remove Pins"><PinBox x /></Tool><HSep />
                  <Tool tall label="Show Gate"><GateBox /></Tool><Tool tall label="Show Names"><NameBox /></Tool><HSep />
                  <Tool tall label="Pop Up"><PushUp /></Tool><Tool tall label="Back"><RoundArrow green /></Tool><Tool tall label="Forward"><RoundArrow /></Tool><Tool tall label="History"><History /></Tool><HSep />
                  <Tool tall label="Compare"><PairBox light /></Tool><Tool tall label="Go To"><GreenPin /></Tool>
                </div>
                <div className="flex min-w-0 flex-1 items-start justify-center overflow-hidden border-r-2 border-[#d3cec8] bg-white pl-px pt-[29px]"><Schematic /></div>
              </div>
              <div role="tablist" className="flex h-7 shrink-0 items-start border-t border-[#b5b0a8] pt-px">
                <Tab icon={<Sigma />} label="Design Summary (Synthesized)" center close className="w-[274px] border-l" />
                <Tab icon={<Doc />} label="D.vhd" center close className="w-[195px]" />
                <Tab icon={<Rtl />} label="D (RTL1)" center close className="w-[195px]" />
                <Tab icon={<Doc />} label="PIPO.vhd" center close className="w-[195px]" />
                <Tab icon={<Rtl />} label="PIPO (RTL1)" center close active className="w-[195px]" />
                <div className="flex-1 border-t border-[#8f8a84]" />
              </div>
            </main>
          </div>
          <div className="flex h-[6px] shrink-0 items-center justify-center"><GripH /></div>

          {/* category dock */}
          <section className="flex h-[174px] shrink-0 flex-col">
            <DockHead title="View by Category" />
            <div className="flex h-[106px] gap-[14px] px-1">
              <div className="flex w-[755px] flex-col">
                <h3 className="pt-px text-center font-bold">Design Objects of Top Level Block</h3>
                <div className="mt-[7px] flex h-[77px] gap-[7px]"><CatBox title="Instances" /><CatBox title="Pins" /><CatBox title="Signals" /></div>
              </div>
              <div className="-ml-[9px] -mr-2 flex items-center pt-6"><GripV h="h-10" /></div>
              <div className="flex min-w-0 flex-1 flex-col">
                <h3 className="pt-px text-center font-bold">Properties: (No Selection)</h3>
                <div className="mt-[7px] h-[77px] border border-[#aca79f] bg-white p-px">
                  <table className="w-full table-fixed border-collapse text-left">
                    <thead>
                      <tr className="h-[26px] border-b border-[#b0aaa3] bg-linear-to-b from-[#f1eeea] from-70% to-[#e3ded8]">
                        <th scope="col" className="border-r border-[#cfcac4] pl-1 pr-2 font-normal">
                          <span className="flex items-center justify-between">Name<I s={10} vb="0 0 10 10"><path d="M1.500 6.500 5 3l3.500 3.500" stroke="#000" strokeWidth="2.200" /></I></span>
                        </th>
                        <th scope="col" className="border-r border-[#cfcac4] pl-1 font-normal">Value</th>
                      </tr>
                    </thead>
                  </table>
                </div>
              </div>
            </div>
            <div role="tablist" className="flex h-[26px] shrink-0 items-start">
              <Tab icon={<ConsoleI />} label="Console" className="w-[93px]" />
              <Tab icon={<ErrI />} label="Errors" className="w-20" />
              <Tab icon={<WarnI />} label="Warnings" className="w-[103px]" />
              <Tab icon={<FindI />} label="Find in Files Results" className="w-[169px]" />
              <Tab icon={<GridI />} label="View by Category" active className="w-[156px]" />
              <div className="flex-1 border-t border-[#8f8a84]" />
            </div>
            <output className="mt-auto px-[5px] pb-[3px] text-right">[520,672]</output>
          </section>
        </div>
      </div>
    </div>
  );
}
